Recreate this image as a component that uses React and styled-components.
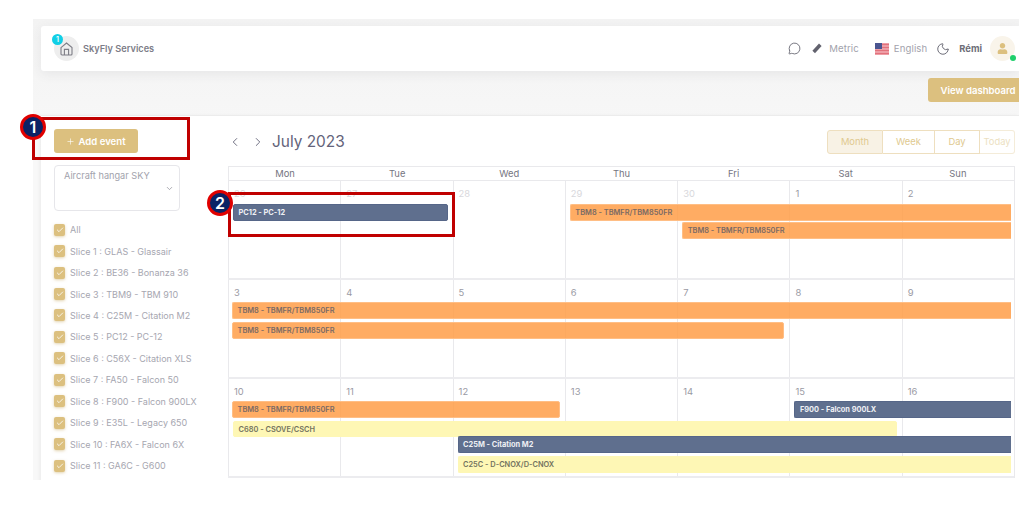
import React from 'react';
import styled, { createGlobalStyle } from 'styled-components';
import { ChevronLeft, ChevronRight, ChevronDown, MessageCircle, Moon, Check, Plus } from 'lucide-react';
import { FaUser } from 'react-icons/fa';

const GlobalStyle = createGlobalStyle`
  html, body {
    margin: 0;
    padding: 0;
    background: #fff;
    font-family: Inter, "Open Sans", "Liberation Sans", sans-serif;
  }
  * { box-sizing: border-box; }
`;

const Page = styled.div`
  position: relative;
  width: 1033px;
  height: 517px;
  padding: 19px 14px 37px 33px;
  overflow: hidden;
`;

const AppFrame = styled.div`
  height: 461px;
  background: linear-gradient(#f3f3f3, #f8f8f8 30%);
  padding: 7px 0 0 8px;
  overflow: hidden;
`;

const Header = styled.header`
  height: 45px;
  background: #fff;
  border-radius: 3px 0 0 3px;
  box-shadow: 0 3px 12px rgba(60, 60, 80, 0.08);
  display: flex;
  align-items: center;
  padding: 0 4px 0 13px;
`;

const Brand = styled.div`
  display: flex;
  align-items: center;
  gap: 4px;
  flex: 1;
  font-size: 9.2px;
  font-weight: 600;
  color: #7d7d88;
`;

const HomeBubble = styled.div`
  position: relative;
  width: 25px;
  height: 25px;
  border-radius: 50%;
  background: #eeeeee;
  display: flex;
  align-items: center;
  justify-content: center;
`;

const CountBadge = styled.span`
  position: absolute;
  top: -2px;
  left: -2px;
  width: 11px;
  height: 11px;
  border-radius: 50%;
  background: #11cfe6;
  color: #fff;
  font-size: 7px;
  line-height: 11px;
  text-align: center;
`;

const HeaderTools = styled.div`
  display: flex;
  align-items: center;
  color: #62626e;
`;

const ToolGap = styled.span`
  width: ${(p) => p.$width}px;
`;

const ToolLabel = styled.span`
  font-size: 9.6px;
  color: #a2a2ac;
  margin-left: ${(p) => p.$left || 0}px;
  letter-spacing: 0.1px;
`;

const UserName = styled.span`
  font-size: 9.4px;
  font-weight: 700;
  color: #6e6e78;
  margin: 0 8px 0 9px;
`;

const Avatar = styled.div`
  position: relative;
  width: 25px;
  height: 25px;
  border-radius: 50%;
  background: #f9f4ea;
  color: #dcc07f;
  display: flex;
  align-items: center;
  justify-content: center;
`;

const OnlineDot = styled.span`
  position: absolute;
  right: -1px;
  bottom: 0;
  width: 6px;
  height: 6px;
  border-radius: 50%;
  background: #1fcf6b;
`;

const ActionRow = styled.div`
  height: 44px;
  padding-top: 7px;
  display: flex;
  justify-content: flex-end;
`;

const GoldButton = styled.button`
  height: 24px;
  border: 0;
  border-radius: 3px;
  background: #dcc07f;
  color: #fff;
  font: 600 9.6px Inter, "Open Sans", sans-serif;
  display: flex;
  align-items: center;
  justify-content: center;
  gap: 3px;
  width: ${(p) => p.$width}px;
  margin-right: ${(p) => p.$bleed || 0}px;
  flex: none;
  padding: 0;
`;

const MainCard = styled.div`
  height: 400px;
  background: #fff;
  border-top: 1px solid #ececec;
  display: flex;
  box-shadow: -2px 0 3px rgba(0, 0, 0, 0.04);
`;

const Sidebar = styled.aside`
  width: 187px;
  padding: 13px 0 0 13px;
  flex: none;
`;

const HangarSelect = styled.div`
  width: 126px;
  height: 46px;
  margin-top: 12px;
  border: 1px solid #e6e6ea;
  border-radius: 4px;
  padding: 4px 9px;
  font-size: 9.2px;
  color: #a2a2ac;
  position: relative;
  svg { position: absolute; right: 5px; top: 18px; color: #85858f; }
`;

const SliceList = styled.ul`
  list-style: none;
  margin: 8px 0 0;
  padding: 0;
`;

const SliceItem = styled.li`
  height: 21.45px;
  display: flex;
  align-items: center;
  gap: 5px;
  font-size: 9px;
  color: #a6a6b0;
  white-space: nowrap;
`;

const CheckBox = styled.span`
  width: 11px;
  height: 12px;
  border-radius: 2px;
  background: #dcc07f;
  box-shadow: 0 1px 3px rgba(200, 170, 100, 0.5);
  color: #fff;
  display: flex;
  align-items: center;
  justify-content: center;
`;

const Calendar = styled.section`
  width: 787px;
  flex: none;
`;

const CalendarBar = styled.div`
  height: 50px;
  display: flex;
  align-items: center;
  color: #66667a;
  padding-top: 1px;
`;

const NavButton = styled.span`
  display: flex;
  width: ${(p) => p.$width}px;
`;

const Title = styled.h2`
  flex: 1;
  margin: 0 0 1px;
  font-size: 15.4px;
  font-weight: 400;
  color: #63637a;
`;

const ViewGroup = styled.div`
  display: flex;
  height: 24px;
`;

const ViewButton = styled.span`
  width: ${(p) => p.$width}px;
  border: 1px solid ${(p) => (p.$faint ? '#f4ecd9' : '#eedfbf')};
  border-left-width: ${(p) => (p.$first ? 1 : 0)}px;
  border-radius: ${(p) => p.$radius || '0'};
  background: ${(p) => (p.$active ? '#f8f2e5' : '#fff')};
  color: ${(p) => (p.$faint ? '#ecdfc2' : '#e0c98f')};
  font-size: 9.4px;
  display: flex;
  align-items: center;
  justify-content: center;
`;

const Grid = styled.div`
  border-right: 1px solid #e9e9ec;
  border-top: 1px solid #e9e9ec;
`;

const DayNames = styled.div`
  display: grid;
  grid-template-columns: repeat(7, 1fr);
  height: 14px;
  border-bottom: 1px solid #e9e9ec;
  border-left: 1px solid #e9e9ec;
`;

const DayName = styled.div`
  text-align: center;
  font-size: 9.4px;
  line-height: 14px;
  color: #75757f;
`;

const Week = styled.div`
  display: grid;
  grid-template-columns: repeat(7, 1fr);
  grid-template-rows: ${(p) => p.$rows};
  height: ${(p) => p.$height}px;
  border-bottom: 2px solid #ececef;
`;

const DayCell = styled.div`
  grid-row: 1 / -1;
  grid-column: ${(p) => p.$col};
  border-left: 1px solid #e9e9ec;
  padding: 7px 0 0 5px;
  font-size: 9.4px;
  color: ${(p) => (p.$muted ? '#d8d8dc' : '#9a9aa4')};
`;

const tones = {
  navy: { background: '#5f6f8e', color: '#eef0f4', border: '#566688', weight: 700 },
  orange: { background: 'rgba(255, 157, 72, 0.85)', color: '#7b6a64', border: '#ffbe85', weight: 600 },
  yellow: { background: '#fef7b5', color: '#73735f', border: '#fef7b5', weight: 600 },
};

const EventBar = styled.div`
  grid-row: ${(p) => p.$row};
  grid-column: ${(p) => p.$start} / span ${(p) => p.$span};
  align-self: start;
  height: ${(p) => p.$height || 17}px;
  margin: 0 ${(p) => (p.$open ? 3 : 5)}px 0 ${(p) => p.$left ?? 5}px;
  background: ${(p) => tones[p.$tone].background};
  color: ${(p) => tones[p.$tone].color};
  border: 1px solid ${(p) => tones[p.$tone].border};
  border-right-width: ${(p) => (p.$open ? 0 : 1)}px;
  border-radius: ${(p) => (p.$open ? '2px 0 0 2px' : '2px')};
  font-size: 7.4px;
  font-weight: ${(p) => tones[p.$tone].weight};
  line-height: 15px;
  padding-left: 4.5px;
  white-space: nowrap;
  overflow: hidden;
  z-index: 1;
`;

const AnnotationBox = styled.div`
  position: absolute;
  left: ${(p) => p.$x}px;
  top: ${(p) => p.$y}px;
  width: ${(p) => p.$w}px;
  height: ${(p) => p.$h}px;
  border: 3px solid #c00000;
  z-index: 3;
`;

const AnnotationBadge = styled.div`
  position: absolute;
  left: ${(p) => p.$x}px;
  top: ${(p) => p.$y}px;
  width: 26px;
  height: 26px;
  border-radius: 50%;
  background: #0b2265;
  border: 3px solid #e00000;
  color: #fff;
  font-size: 16px;
  font-weight: 600;
  line-height: 20px;
  text-align: center;
  z-index: 4;
`;

const HomeIcon = () => (
  <svg width="13" height="14" viewBox="0 0 13 14" fill="none" stroke="#7d7d86" strokeWidth="1.1">
    <path d="M1 5.6 6.5 1 12 5.6V12a1 1 0 0 1-1 1H2a1 1 0 0 1-1-1z" />
    <path d="M4.4 13V7.4h4.2V13" />
  </svg>
);

const RulerIcon = () => (
  <svg width="10" height="11" viewBox="0 0 10 11" fill="#62626e">
    <path d="M7 .5 9.6 3 3 10.2.4 7.8z" />
  </svg>
);

const UsFlag = () => (
  <svg width="14" height="12" viewBox="0 0 14 12">
    <rect width="14" height="12" fill="#f2aeb4" />
    <path d="M0 1.5h14M0 4.5h14M0 7.5h14M0 10.5h14" stroke="#e2727c" strokeWidth="1.3" />
    <rect width="7" height="6" fill="#4a5590" />
  </svg>
);

const sliceNames = [
  'All',
  'Slice 1 : GLAS - Glassair',
  'Slice 2 : BE36 - Bonanza 36',
  'Slice 3 : TBM9 - TBM 910',
  'Slice 4 : C25M - Citation M2',
  'Slice 5 : PC12 - PC-12',
  'Slice 6 : C56X - Citation XLS',
  'Slice 7 : FA50 - Falcon 50',
  'Slice 8 : F900 - Falcon 900LX',
  'Slice 9 : E35L - Legacy 650',
  'Slice 10 : FA6X - Falcon 6X',
  'Slice 11 : GA6C - G600',
];

const dayNames = ['Mon', 'Tue', 'Wed', 'Thu', 'Fri', 'Sat', 'Sun'];

const TBM = 'TBM8 - TBMFR/TBM850FR';

const weeks = [
  {
    height: 99,
    rows: '23px 17.5px 1fr',
    days: [[26, true], [27, true], [28, true], [29, true], [30, true], [1], [2]],
    events: [
      { label: 'PC12 - PC-12', tone: 'navy', row: 2, start: 1, span: 2 },
      { label: TBM, tone: 'orange', row: 2, start: 4, span: 4, open: true },
      { label: TBM, tone: 'orange', row: 3, start: 5, span: 3, open: true },
    ],
  },
  {
    height: 99,
    rows: '22px 20px 1fr',
    days: [[3], [4], [5], [6], [7], [8], [9]],
    events: [
      { label: TBM, tone: 'orange', row: 2, start: 1, span: 7, left: 4, open: true },
      { label: TBM, tone: 'orange', row: 3, start: 1, span: 5, left: 4 },
    ],
  },
  {
    height: 99,
    rows: '22px 20px 15px 20px 1fr',
    days: [[10], [11], [12], [13], [14], [15], [16]],
    events: [
      { label: TBM, tone: 'orange', row: 2, start: 1, span: 3, left: 4 },
      { label: 'F900 - Falcon 900LX', tone: 'navy', row: 2, start: 6, span: 2, open: true },
      { label: 'C680 - CSOVE/CSCH', tone: 'yellow', row: 3, start: 1, span: 6, height: 16 },
      { label: 'C25M - Citation M2', tone: 'navy', row: 4, start: 3, span: 5, open: true },
      { label: 'C25C - D-CNOX/D-CNOX', tone: 'yellow', row: 5, start: 3, span: 5, open: true },
    ],
  },
];

export default function App() {
  return (
    <Page>
      <GlobalStyle />
      <AppFrame>
        <Header>
          <Brand>
            <HomeBubble>
              <HomeIcon />
              <CountBadge>1</CountBadge>
            </HomeBubble>
            SkyFly Services
          </Brand>
          <HeaderTools>
            <MessageCircle size={13} strokeWidth={1.6} />
            <ToolGap $width={11} />
            <RulerIcon />
            <ToolLabel $left={7}>Metric</ToolLabel>
            <ToolGap $width={16} />
            <UsFlag />
            <ToolLabel $left={5}>English</ToolLabel>
            <ToolGap $width={9} />
            <Moon size={14} strokeWidth={1.6} />
            <UserName>Rémi</UserName>
            <Avatar>
              <FaUser size={11} />
              <OnlineDot />
            </Avatar>
          </HeaderTools>
        </Header>
        <ActionRow>
          <GoldButton $width={100} $bleed={-9}>View dashboard</GoldButton>
        </ActionRow>
        <MainCard>
          <Sidebar>
            <GoldButton $width={84}>
              <Plus size={9} strokeWidth={1.6} />
              Add event
            </GoldButton>
            <HangarSelect>
              Aircraft hangar SKY
              <ChevronDown size={9} strokeWidth={1.8} />
            </HangarSelect>
            <SliceList>
              {sliceNames.map((name) => (
                <SliceItem key={name}>
                  <CheckBox>
                    <Check size={8} strokeWidth={2.4} />
                  </CheckBox>
                  {name}
                </SliceItem>
              ))}
            </SliceList>
          </Sidebar>
          <Calendar>
            <CalendarBar>
              <NavButton $width={23}>
                <ChevronLeft size={14} strokeWidth={1.6} />
              </NavButton>
              <NavButton $width={21}>
                <ChevronRight size={14} strokeWidth={1.6} />
              </NavButton>
              <Title>July 2023</Title>
              <ViewGroup>
                <ViewButton $first $active $width={56} $radius="3px 0 0 3px">Month</ViewButton>
                <ViewButton $width={52}>Week</ViewButton>
                <ViewButton $width={45}>Day</ViewButton>
                <ViewButton $faint $width={35} $radius="0 3px 3px 0">Today</ViewButton>
              </ViewGroup>
            </CalendarBar>
            <Grid>
              <DayNames>
                {dayNames.map((d) => (
                  <DayName key={d}>{d}</DayName>
                ))}
              </DayNames>
              {weeks.map((week) => (
                <Week key={week.days[6][0]} $height={week.height} $rows={week.rows}>
                  {week.days.map(([num, muted], i) => (
                    <DayCell key={i} $col={i + 1} $muted={muted}>{num}</DayCell>
                  ))}
                  {week.events.map((ev) => (
                    <EventBar
                      key={`${ev.label}-${ev.start}-${ev.row}`}
                      $tone={ev.tone}
                      $row={ev.row}
                      $start={ev.start}
                      $span={ev.span}
                      $left={ev.left}
                      $open={ev.open}
                      $height={ev.height}
                    >
                      {ev.label}
                    </EventBar>
                  ))}
                </Week>
              ))}
            </Grid>
          </Calendar>
        </MainCard>
      </AppFrame>
      <AnnotationBox $x={32} $y={117} $w={158} $h={43} />
      <AnnotationBadge $x={20} $y={114}>1</AnnotationBadge>
      <AnnotationBox $x={228} $y={192} $w={227} $h={45} />
      <AnnotationBadge $x={207} $y={190}>2</AnnotationBadge>
    </Page>
  );
}
